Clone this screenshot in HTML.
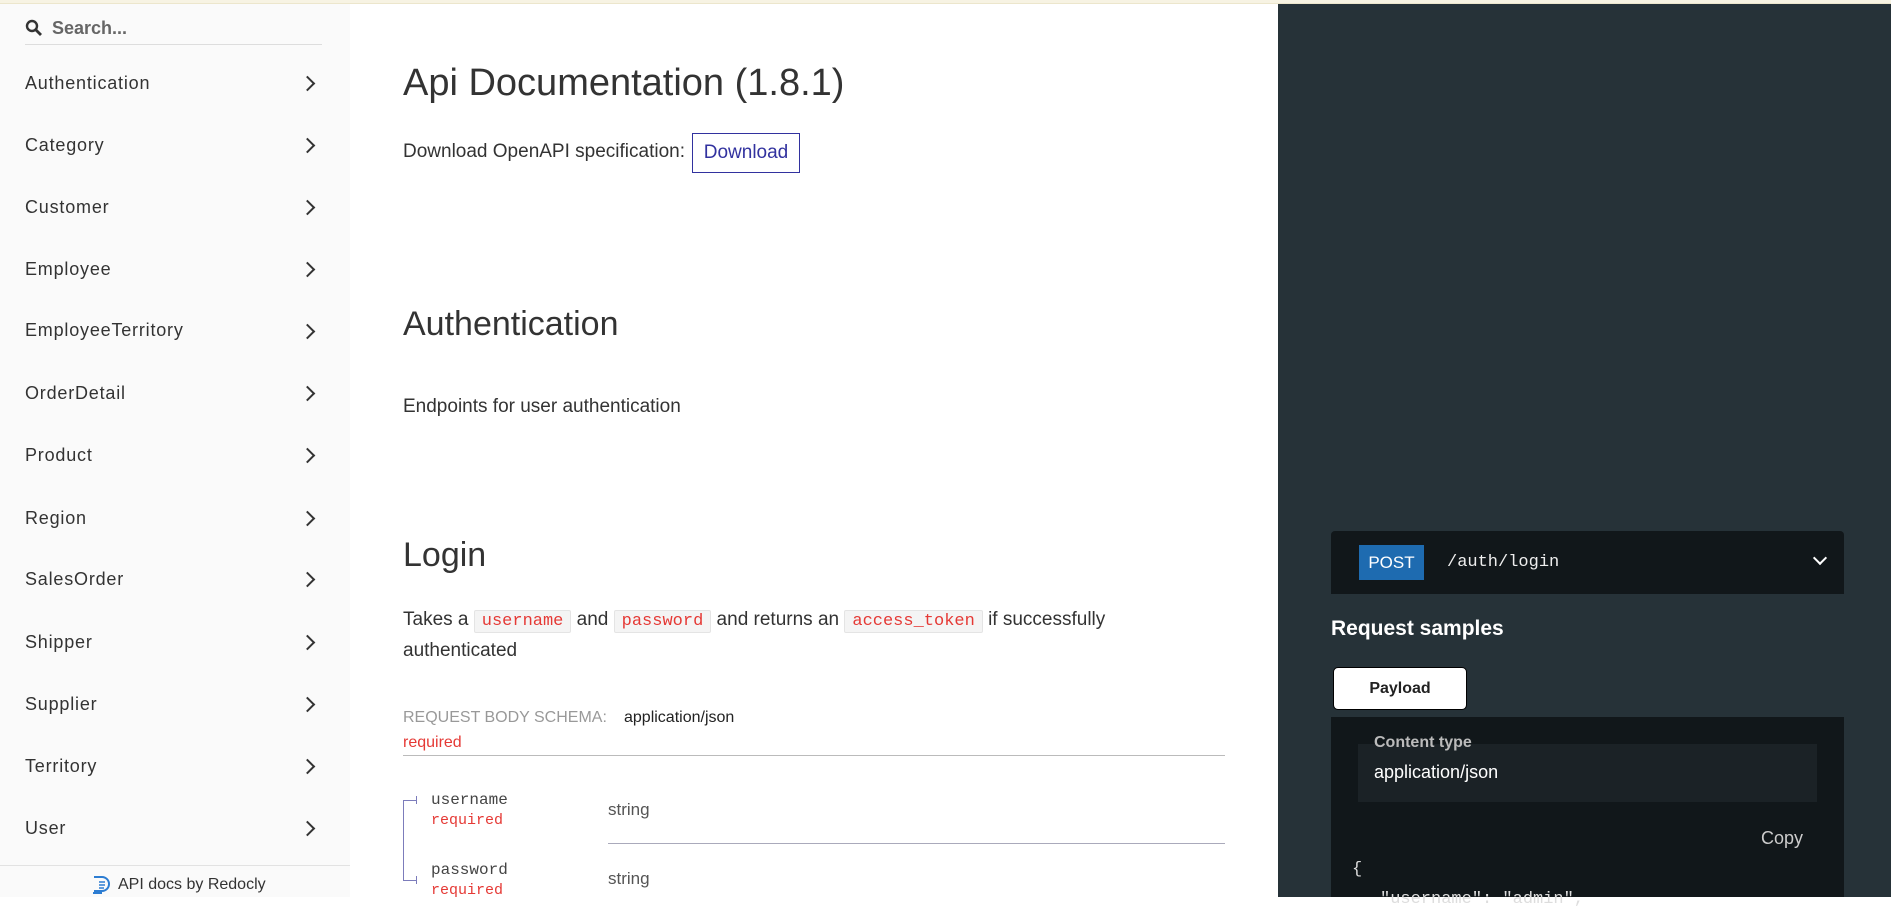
<!DOCTYPE html>
<html><head><meta charset="utf-8">
<style>
*{margin:0;padding:0;box-sizing:border-box}
body{width:1891px;height:897px;overflow:hidden;position:relative;background:#fff;font-family:"Liberation Sans",sans-serif;color:#333}
.a{position:absolute;white-space:nowrap}
#top{position:absolute;left:0;top:0;width:1891px;height:4px;background:#f7f3e3;border-bottom:1px solid #ece6cc}
#side{position:absolute;left:0;top:4px;width:350px;height:893px;background:#fafafa}
.mi{position:absolute;left:25px;font-size:18px;letter-spacing:0.8px;color:#333}
.ch{position:absolute;left:302px;width:11px;height:11px;border-right:2.5px solid #333;border-top:2.5px solid #333;transform:rotate(45deg)}
#right{position:absolute;left:1278px;top:4px;width:613px;height:893px;background:#263238}
.code{font-family:"Liberation Mono",monospace}
.tag{display:inline-block;font-family:"Liberation Mono",monospace;color:#e53935;background:#f4f4f4;border:1px solid #e4e4e4;border-radius:2px;padding:0 7px;font-size:17px;line-height:21px}
</style></head><body>
<div id="top"></div>
<div id="side">
  <svg class="a" style="left:25px;top:15px" width="18" height="18" viewBox="0 0 18 18"><circle cx="7" cy="7" r="5" fill="none" stroke="#333" stroke-width="2.4"/><line x1="10.5" y1="10.5" x2="16" y2="16" stroke="#333" stroke-width="2.8"/></svg>
  <div class="a" style="left:52px;top:14px;font-size:18px;font-weight:bold;color:#666">Search...</div>
  <div class="a" style="left:25px;top:40px;width:297px;height:1px;background:#ddd"></div>
</div>
<div class="mi a" style="top:73px">Authentication</div><div class="ch" style="top:78px"></div>
<div class="mi a" style="top:135px">Category</div><div class="ch" style="top:140px"></div>
<div class="mi a" style="top:197px">Customer</div><div class="ch" style="top:202px"></div>
<div class="mi a" style="top:259px">Employee</div><div class="ch" style="top:264px"></div>
<div class="mi a" style="top:320px">EmployeeTerritory</div><div class="ch" style="top:326px"></div>
<div class="mi a" style="top:383px">OrderDetail</div><div class="ch" style="top:388px"></div>
<div class="mi a" style="top:445px">Product</div><div class="ch" style="top:450px"></div>
<div class="mi a" style="top:508px">Region</div><div class="ch" style="top:513px"></div>
<div class="mi a" style="top:569px">SalesOrder</div><div class="ch" style="top:574px"></div>
<div class="mi a" style="top:632px">Shipper</div><div class="ch" style="top:637px"></div>
<div class="mi a" style="top:694px">Supplier</div><div class="ch" style="top:699px"></div>
<div class="mi a" style="top:756px">Territory</div><div class="ch" style="top:761px"></div>
<div class="mi a" style="top:818px">User</div><div class="ch" style="top:823px"></div>
<div class="a" style="left:0;top:865px;width:350px;height:1px;background:#e2e2e2"></div>
<svg class="a" style="left:92px;top:876px" width="20" height="18" viewBox="0 0 20 18"><path d="M2 1h8a7 7 0 0 1 0 14H2" fill="none" stroke="#2d7dd2" stroke-width="2"/><path d="M7 6h6M7 9h6M7 12h5" stroke="#2d7dd2" stroke-width="1.5"/><path d="M1 17h9" stroke="#2d7dd2" stroke-width="2"/></svg>
<div class="a" style="left:118px;top:876px;font-size:16px;color:#333">API docs by Redocly</div>

<div class="a" style="left:403px;top:62px;font-size:38px;color:#333">Api Documentation (1.8.1)</div>
<div class="a" style="left:403px;top:141px;font-size:19px">Download OpenAPI specification:</div>
<div class="a" style="left:692px;top:133px;width:108px;height:40px;border:1px solid #32329f;color:#32329f;font-size:19px;text-align:center;line-height:38px">Download</div>
<div class="a" style="left:403px;top:305px;font-size:34px;color:#333">Authentication</div>
<div class="a" style="left:403px;top:396px;font-size:19px">Endpoints for user authentication</div>
<div class="a" style="left:403px;top:536px;font-size:34px;color:#333">Login</div>
<div class="a" style="left:403px;top:604px;font-size:19px;line-height:31px">Takes a <span class="tag">username</span> and <span class="tag">password</span> and returns an <span class="tag">access_token</span> if successfully<br>authenticated</div>
<div class="a" style="left:403px;top:709px;font-size:16px;color:#999">REQUEST BODY SCHEMA:</div>
<div class="a" style="left:624px;top:709px;font-size:16px;color:#222">application/json</div>
<div class="a" style="left:403px;top:734px;font-size:16px;color:#e53935">required</div>
<div class="a" style="left:403px;top:755px;width:822px;height:1px;background:#bbb"></div>
<div class="a" style="left:403px;top:800px;width:1px;height:80px;background:#7c7cbb"></div>
<div class="a" style="left:403px;top:800px;width:13px;height:1px;background:#7c7cbb"></div>
<div class="a" style="left:416px;top:796px;width:1px;height:8px;background:#7c7cbb"></div>
<div class="a" style="left:403px;top:880px;width:13px;height:1px;background:#7c7cbb"></div>
<div class="a" style="left:416px;top:876px;width:1px;height:8px;background:#7c7cbb"></div>
<div class="a code" style="left:431px;top:791px;font-size:16px;color:#444">username</div>
<div class="a code" style="left:431px;top:812px;font-size:15px;color:#e53935">required</div>
<div class="a" style="left:608px;top:800px;font-size:17px;color:#555">string</div>
<div class="a" style="left:608px;top:843px;width:617px;height:1px;background:#aab"></div>
<div class="a code" style="left:431px;top:861px;font-size:16px;color:#444">password</div>
<div class="a code" style="left:431px;top:882px;font-size:15px;color:#e53935">required</div>
<div class="a" style="left:608px;top:869px;font-size:17px;color:#555">string</div>

<div id="right"></div>
<div class="a" style="left:1331px;top:531px;width:513px;height:63px;background:#11171a;border-radius:4px 4px 0 0"></div>
<div class="a" style="left:1359px;top:545px;width:65px;height:35px;background:#1e6bb0;color:#fff;font-size:17px;text-align:center;line-height:35px">POST</div>
<div class="a code" style="left:1447px;top:553px;font-size:17px;color:#eee">/auth/login</div>
<div class="a" style="left:1815px;top:553px;width:10px;height:10px;border-right:2.5px solid #fff;border-bottom:2.5px solid #fff;transform:rotate(45deg)"></div>
<div class="a" style="left:1331px;top:617px;font-size:21px;font-weight:bold;color:#fff">Request samples</div>
<div class="a" style="left:1333px;top:667px;width:134px;height:43px;background:#fff;border-radius:5px;border:1px solid #000;font-size:16px;font-weight:bold;color:#222;text-align:center;line-height:41px">Payload</div>
<div class="a" style="left:1331px;top:717px;width:513px;height:180px;background:#11171a"></div>
<div class="a" style="left:1358px;top:744px;width:459px;height:58px;background:#1b2226"></div>
<div class="a" style="left:1374px;top:734px;font-size:16px;font-weight:bold;color:#bbb">Content type</div>
<div class="a" style="left:1374px;top:762px;font-size:18px;color:#fff">application/json</div>
<div class="a" style="left:1761px;top:828px;font-size:18px;color:#ccc">Copy</div>
<div class="a code" style="left:1352px;top:860px;font-size:17px;color:#ddd">{</div>
<div class="a code" style="left:1380px;top:890px;font-size:17px;color:#ddd">"username": "admin",</div>
</body></html>
